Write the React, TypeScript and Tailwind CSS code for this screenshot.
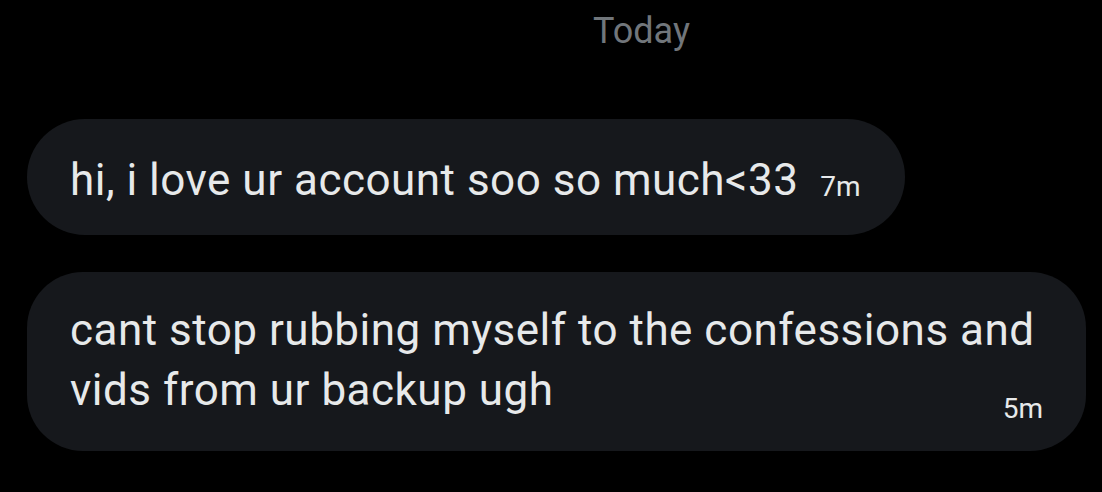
export default function App() {
  return (
    <div
      className="w-[1102px] h-[492px] bg-black overflow-hidden"
      style={{ fontFamily: "Roboto, 'Liberation Sans', sans-serif" }}
    >
      <div className="pt-[9px] pl-[593px] text-[36px] leading-[44px] text-[#71767b]">Today</div>

      <div className="mt-[66px] ml-[27px] w-[878px] h-[116px] rounded-[58px] bg-[#16181c] flex items-center pl-[43px] pr-[45px] pt-[6px]">
        <span className="text-[44px] leading-[60px] text-[#e7e9ea] tracking-[0.5px] whitespace-nowrap">
          hi, i love ur account soo so much&lt;33
        </span>
        <span className="ml-[22px] mt-[14px] text-[28px] leading-none text-[#e7e9ea]">7m</span>
      </div>

      <div className="mt-[37px] ml-[27px] w-[1059px] h-[179px] rounded-[56px] bg-[#16181c] flex flex-col pl-[43px] pr-[43px] pt-[28px] text-[#e7e9ea]">
        <p className="text-[44px] leading-[60px] tracking-[0.5px] whitespace-nowrap">
          cant stop rubbing myself to the confessions and
        </p>
        <div className="flex items-end justify-between">
          <p className="text-[44px] leading-[60px] tracking-[0.5px]">vids from ur backup ugh</p>
          <span className="mb-[-3px] text-[28px] leading-none">5m</span>
        </div>
      </div>
    </div>
  );
}
